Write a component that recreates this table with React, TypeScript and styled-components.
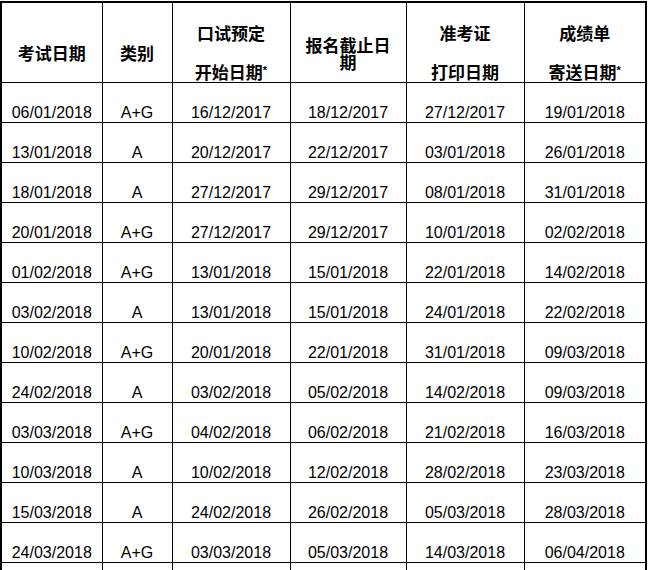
import React from "react";
import styled, { createGlobalStyle } from "styled-components";

const GlobalStyle = createGlobalStyle`
  html, body { margin: 0; padding: 0; background: #ffffff; }
  body { font-family: "Liberation Sans", Arial, sans-serif; color: #000; }
`;

const Page = styled.div`
  padding: 1px 0 0 0;
`;

const Table = styled.table`
  border-collapse: collapse;
  border: 2px solid #000;
  table-layout: fixed;
  width: 646px;
`;

const Col = styled.col<{ $w: number }>`
  width: ${(p) => p.$w}px;
`;

const HeadCell = styled.th`
  border: 1px solid #000;
  height: 59px;
  padding: 20px 0 0 0;
  vertical-align: middle;
  text-align: center;
  font-family: "Noto Sans CJK SC", "Liberation Sans", sans-serif;
  font-weight: 700;
  font-size: 17px;
  line-height: 20px;
  color: #000;
`;

const HeadLine = styled.span<{ $gap?: number }>`
  display: block;
  margin-top: ${(p) => p.$gap ?? 0}px;
`;

const Tight = styled.span`
  display: block;
  line-height: 17px;
`;

const Star = styled.span`
  font-family: "Liberation Sans", Arial, sans-serif;
  font-size: 11px;
  font-weight: 700;
  vertical-align: 5px;
  line-height: 0;
`;

const Row = styled.tr`
  height: 40px;
`;

const Cell = styled.td`
  border: 1px solid #000;
  padding: 0;
  vertical-align: bottom;
  text-align: center;
  font-family: "Liberation Sans", Arial, sans-serif;
  font-size: 16px;
  line-height: 18px;
  color: #000;
`;

const rows: [string, string, string, string, string, string][] = [
  ["06/01/2018", "A+G", "16/12/2017", "18/12/2017", "27/12/2017", "19/01/2018"],
  ["13/01/2018", "A", "20/12/2017", "22/12/2017", "03/01/2018", "26/01/2018"],
  ["18/01/2018", "A", "27/12/2017", "29/12/2017", "08/01/2018", "31/01/2018"],
  ["20/01/2018", "A+G", "27/12/2017", "29/12/2017", "10/01/2018", "02/02/2018"],
  ["01/02/2018", "A+G", "13/01/2018", "15/01/2018", "22/01/2018", "14/02/2018"],
  ["03/02/2018", "A", "13/01/2018", "15/01/2018", "24/01/2018", "22/02/2018"],
  ["10/02/2018", "A+G", "20/01/2018", "22/01/2018", "31/01/2018", "09/03/2018"],
  ["24/02/2018", "A", "03/02/2018", "05/02/2018", "14/02/2018", "09/03/2018"],
  ["03/03/2018", "A+G", "04/02/2018", "06/02/2018", "21/02/2018", "16/03/2018"],
  ["10/03/2018", "A", "10/02/2018", "12/02/2018", "28/02/2018", "23/03/2018"],
  ["15/03/2018", "A", "24/02/2018", "26/02/2018", "05/03/2018", "28/03/2018"],
  ["24/03/2018", "A+G", "03/03/2018", "05/03/2018", "14/03/2018", "06/04/2018"],
  ["31/03/2018", "A", "10/03/2018", "12/03/2018", "21/03/2018", "13/04/2018"],
];

const widths = [101, 70, 118, 116, 118, 122];

export default function App() {
  return (
    <Page>
      <GlobalStyle />
      <Table>
        <colgroup>
          {widths.map((w, i) => (
            <Col key={i} $w={w} />
          ))}
        </colgroup>
        <thead>
          <tr>
            <HeadCell>考试日期</HeadCell>
            <HeadCell>类别</HeadCell>
            <HeadCell>
              <HeadLine>口试预定</HeadLine>
              <HeadLine $gap={19}>
                开始日期<Star>*</Star>
              </HeadLine>
            </HeadCell>
            <HeadCell>
              <Tight>
                报名截止日
                <br />期
              </Tight>
            </HeadCell>
            <HeadCell>
              <HeadLine>准考证</HeadLine>
              <HeadLine $gap={19}>打印日期</HeadLine>
            </HeadCell>
            <HeadCell>
              <HeadLine>成绩单</HeadLine>
              <HeadLine $gap={19}>
                寄送日期<Star>*</Star>
              </HeadLine>
            </HeadCell>
          </tr>
        </thead>
        <tbody>
          {rows.map((r, i) => (
            <Row key={i}>
              {r.map((c, j) => (
                <Cell key={j}>{c}</Cell>
              ))}
            </Row>
          ))}
        </tbody>
      </Table>
    </Page>
  );
}
